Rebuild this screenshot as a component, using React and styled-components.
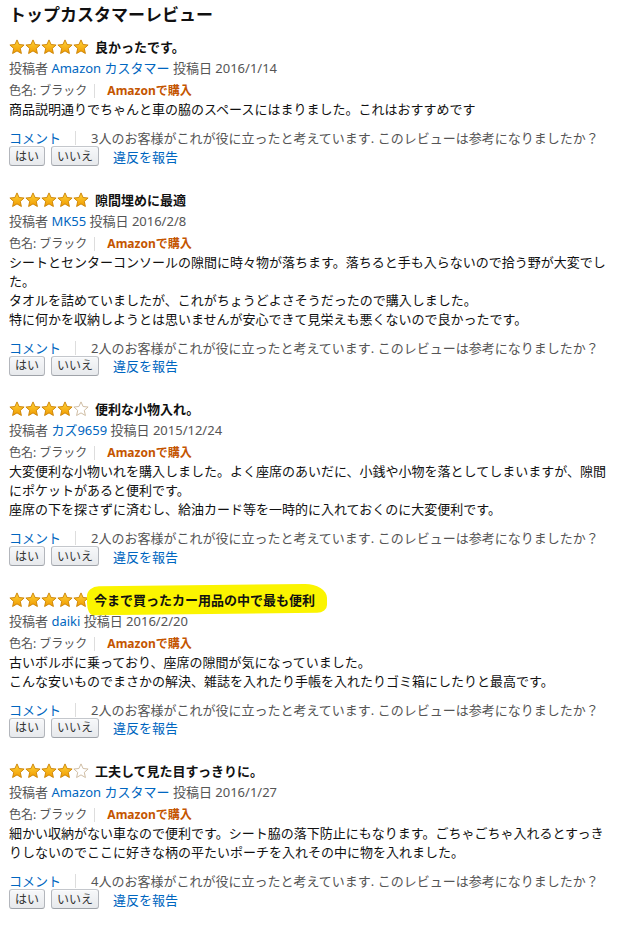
import React from "react";
import styled, { createGlobalStyle } from "styled-components";

const reviews = [
  {
    rating: 5,
    title: "良かったです。",
    author: "Amazon カスタマー",
    date: "2016/1/14",
    body: ["商品説明通りでちゃんと車の脇のスペースにはまりました。これはおすすめです"],
    helpful: 3,
  },
  {
    rating: 5,
    title: "隙間埋めに最適",
    author: "MK55",
    date: "2016/2/8",
    body: [
      "シートとセンターコンソールの隙間に時々物が落ちます。落ちると手も入らないので拾う野が大変でした。",
      "タオルを詰めていましたが、これがちょうどよさそうだったので購入しました。",
      "特に何かを収納しようとは思いませんが安心できて見栄えも悪くないので良かったです。",
    ],
    helpful: 2,
  },
  {
    rating: 4,
    title: "便利な小物入れ。",
    author: "カズ9659",
    date: "2015/12/24",
    body: [
      "大変便利な小物いれを購入しました。よく座席のあいだに、小銭や小物を落としてしまいますが、隙間にポケットがあると便利です。",
      "座席の下を探さずに済むし、給油カード等を一時的に入れておくのに大変便利です。",
    ],
    helpful: 2,
  },
  {
    rating: 5,
    title: "今まで買ったカー用品の中で最も便利",
    marked: true,
    author: "daiki",
    date: "2016/2/20",
    body: [
      "古いボルボに乗っており、座席の隙間が気になっていました。",
      "こんな安いものでまさかの解決、雑誌を入れたり手帳を入れたりゴミ箱にしたりと最高です。",
    ],
    helpful: 2,
  },
  {
    rating: 4,
    title: "工夫して見た目すっきりに。",
    author: "Amazon カスタマー",
    date: "2016/1/27",
    body: [
      "細かい収納がない車なので便利です。シート脇の落下防止にもなります。ごちゃごちゃ入れるとすっきりしないのでここに好きな柄の平たいポーチを入れその中に物を入れました。",
    ],
    helpful: 4,
  },
];

const GlobalStyle = createGlobalStyle`
  body {
    margin: 0;
    background: #fff;
    font-family: "Noto Sans", "Noto Sans CJK JP", sans-serif;
    color: #111;
  }
`;

const Page = styled.div`
  width: 600px;
  padding: 2px 0 0 9px;
`;

const Heading = styled.h2`
  margin: 0 0 9px;
  font-size: 17px;
  line-height: 26px;
  font-weight: 700;
  color: #111;
`;

const Review = styled.div`
  margin-bottom: 23.5px;
`;

const TitleRow = styled.div`
  display: flex;
  align-items: center;
  height: 20px;
  gap: 6px;
`;

const Stars = styled.div`
  display: flex;
`;

const Title = styled.span`
  font-size: 13px;
  font-weight: 700;
  line-height: 20px;
  position: relative;
  z-index: 0;
  ${(p) =>
    p.$marked &&
    `
    padding: 0 12px 0 2px;
    margin-left: -3px;
    &::before {
      content: "";
      position: absolute;
      z-index: -1;
      left: -5px;
      right: 0;
      top: -5px;
      bottom: -4px;
      background: #fbf400;
      border-radius: 12px 22px 10px 6px / 10px 14px 8px 12px;
      transform: rotate(-0.6deg);
    }
  `}
`;

const Byline = styled.div`
  font-size: 13px;
  line-height: 20px;
  color: #555;
  margin-top: 1px;
`;

const Link = styled.a`
  color: #0066c0;
  text-decoration: none;
`;

const Meta = styled.div`
  display: flex;
  align-items: center;
  font-size: 12px;
  line-height: 18px;
  color: #555;
  margin-top: 4px;
`;

const Divider = styled.span`
  width: 1px;
  height: 14px;
  background: #ddd;
  margin: ${(p) => (p.$wide ? "0 15px 0 14px" : "0 12px 0 7px")};
`;

const Verified = styled.span`
  color: #c45500;
  font-weight: 700;
`;

const Body = styled.div`
  font-size: 13px;
  line-height: 19px;
  color: #111;
`;

const Para = styled.p`
  margin: 0;
`;

const ActionRow = styled.div`
  display: flex;
  align-items: center;
  font-size: 13px;
  line-height: 18px;
  margin-top: 10px;
  color: #555;
`;

const Buttons = styled.div`
  display: flex;
  align-items: center;
  gap: 6px;
  margin-top: -1px;
`;

const VoteButton = styled.button`
  font-family: inherit;
  font-size: 12px;
  line-height: 17px;
  height: 20px;
  padding: 0 5px;
  color: #333;
  border: 1px solid #adb1b8;
  border-color: #c4c7cc #b3b6bc #9fa3a9;
  border-radius: 3px;
  background: linear-gradient(#f7f8fa, #e7e9ec);
  box-shadow: inset 0 1px 0 rgba(255, 255, 255, 0.6);
`;

const ReportLink = styled(Link)`
  font-size: 13px;
  margin-left: 8px;
`;

function Star({ filled, id }) {
  return (
    <svg width="16" height="16" viewBox="0 0 16 16">
      <defs>
        <linearGradient id={id} x1="0" y1="0" x2="0" y2="1">
          <stop offset="0" stopColor="#ffd43a" />
          <stop offset="1" stopColor="#f09a00" />
        </linearGradient>
      </defs>
      <path
        d="M8 0.9 L10.1 5.5 L15.1 6 L11.3 9.4 L12.4 14.5 L8 11.9 L3.6 14.5 L4.7 9.4 L0.9 6 L5.9 5.5 Z"
        fill={filled ? `url(#${id})` : "#fff"}
        stroke={filled ? "#c98000" : "#c9b59a"}
        strokeWidth="0.9"
        strokeLinejoin="round"
      />
    </svg>
  );
}

function ReviewItem({ r, idx }) {
  return (
    <Review>
      <TitleRow>
        <Stars>
          {[0, 1, 2, 3, 4].map((i) => (
            <Star key={i} filled={i < r.rating} id={`g${idx}-${i}`} />
          ))}
        </Stars>
        <Title $marked={r.marked}>{r.title}</Title>
      </TitleRow>
      <Byline>
        投稿者 <Link href="#">{r.author}</Link> 投稿日 {r.date}
      </Byline>
      <Meta>
        色名: ブラック
        <Divider />
        <Verified>Amazonで購入</Verified>
      </Meta>
      <Body>
        {r.body.map((t, i) => (
          <Para key={i}>{t}</Para>
        ))}
      </Body>
      <ActionRow>
        <Link href="#">コメント</Link>
        <Divider $wide />
        {r.helpful}人のお客様がこれが役に立ったと考えています. このレビューは参考になりましたか？
      </ActionRow>
      <Buttons>
        <VoteButton>はい</VoteButton>
        <VoteButton>いいえ</VoteButton>
        <ReportLink href="#">違反を報告</ReportLink>
      </Buttons>
    </Review>
  );
}

export default function App() {
  return (
    <Page>
      <GlobalStyle />
      <Heading>トップカスタマーレビュー</Heading>
      {reviews.map((r, i) => (
        <ReviewItem key={i} r={r} idx={i} />
      ))}
    </Page>
  );
}
